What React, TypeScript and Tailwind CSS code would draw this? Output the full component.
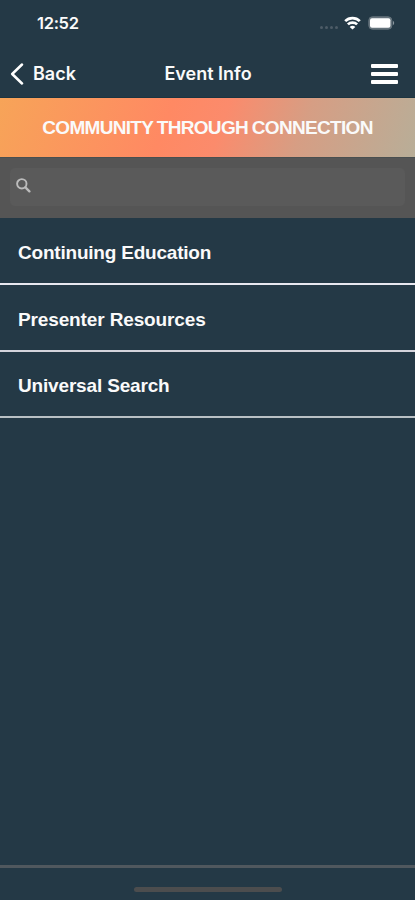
const rows = [
  { label: "Continuing Education", style: "h-[67px] pt-[4px] tracking-[-0.21px] border-[#e8e8f0]" },
  { label: "Presenter Resources", style: "h-[67px] pt-[4px] tracking-[-0.13px] border-[#d4d4dc]" },
  { label: "Universal Search", style: "h-[66px] pt-[3px] tracking-[-0.17px] border-[#b9c0c4]" },
];

function StatusBar() {
  return (
    <div className="flex h-[46px] items-center justify-between pr-[20px] pl-[37px]">
      <span className="text-[16.5px] leading-none font-semibold tracking-[-0.3px]">12:52</span>
      <div className="flex items-center">
        <div className="mt-[8px] mr-[6px] flex gap-[2px]">
          <i className="size-[3px] rounded-full bg-[#4d5c67]" />
          <i className="size-[3px] rounded-full bg-[#4d5c67]" />
          <i className="size-[3px] rounded-full bg-[#4d5c67]" />
          <i className="size-[3px] rounded-full bg-[#4d5c67]" />
        </div>
        <svg width="17" height="14" viewBox="0 0 17 14" fill="none" stroke="white" strokeWidth="2.7">
          <path d="M1.2 5.1C5.2 1 11.8 1 15.8 5.1" />
          <path d="M3.9 8.4C6.4 6 10.6 6 13.1 8.4" />
          <path d="M8.5 13.6L5.7 10.9C7.2 9.5 9.8 9.5 11.3 10.9Z" fill="white" stroke="none" />
        </svg>
        <svg className="ml-[7px]" width="27" height="14" viewBox="0 0 27 14">
          <rect x="0.8" y="0.8" width="23" height="12.4" rx="3.6" fill="#65737c" stroke="#65737c" strokeWidth="1" />
          <rect x="2" y="2.2" width="20.4" height="9.6" rx="2" fill="white" />
          <path d="M24.9 4.8C26.6 5.6 26.6 8.4 24.9 9.2Z" fill="#8b979e" />
        </svg>
      </div>
    </div>
  );
}

export default function App() {
  return (
    <main className="flex h-[900px] w-[415px] flex-col overflow-hidden bg-[#243946] font-['Inter',sans-serif] text-[#fafafa]">
      <StatusBar />
      <nav className="grid h-[52px] grid-cols-[100px_1fr_100px] items-center border-b border-[#1c3440]">
        <div className="flex items-center pt-[4px] pl-[10px]">
          <svg width="15" height="22" viewBox="0 0 15 22" fill="none" stroke="white" strokeWidth="2.5" strokeLinecap="round" strokeLinejoin="round">
            <path d="M12 1.5L2.2 11L12 20.5" />
          </svg>
          <span className="ml-[8px] text-[18px] leading-none font-semibold">Back</span>
        </div>
        <h1 className="pt-[4px] pl-px text-center text-[18px] leading-none font-semibold whitespace-nowrap">Event Info</h1>
        <div className="mt-[5px] mr-[17px] flex w-[27px] flex-col gap-[4px] justify-self-end">
          <i className="h-[4px] rounded-[1px] bg-white" />
          <i className="h-[4px] rounded-[1px] bg-white" />
          <i className="h-[4px] rounded-[1px] bg-white" />
        </div>
      </nav>
      <header className="flex h-[59px] items-center justify-center bg-[linear-gradient(110deg,#f7a458_0%,#ff8963_40%,#fb8b6c_53%,#d69e84_72%,#b8ae98_100%)] font-['Liberation_Sans',sans-serif]">
        <h2 className="text-[19px] leading-none font-bold tracking-[-0.68px] [word-spacing:-0.8px] whitespace-nowrap">COMMUNITY THROUGH CONNECTION</h2>
      </header>
      <div className="h-[61px] border-t border-[#494f50] bg-[#555555] px-[10px] pt-[10px]">
        <div className="flex h-[38px] items-center rounded-[5px] bg-[#5a5a5a] pb-[3px] pl-[6px]">
          <svg width="15" height="15" viewBox="0 0 15 15" fill="none" stroke="#bcbcbc" strokeWidth="1.9" strokeLinecap="round">
            <circle cx="5.8" cy="5.8" r="4.7" />
            <path d="M9.4 9.4L13.4 13.4" strokeWidth="2.3" />
          </svg>
        </div>
      </div>
      <ul className="font-['Liberation_Sans',sans-serif] text-[19px] font-bold">
        {rows.map(({ label, style }) => (
          <li key={label} className={`flex items-center border-b-2 pl-[18px] leading-none ${style}`}>
            {label}
          </li>
        ))}
      </ul>
      <footer className="mt-auto flex h-[35px] justify-center border-t-[3px] border-[#50585e]">
        <div className="mt-[19px] h-[5px] w-[148px] rounded-full bg-[#4c4d4e]" />
      </footer>
    </main>
  );
}
